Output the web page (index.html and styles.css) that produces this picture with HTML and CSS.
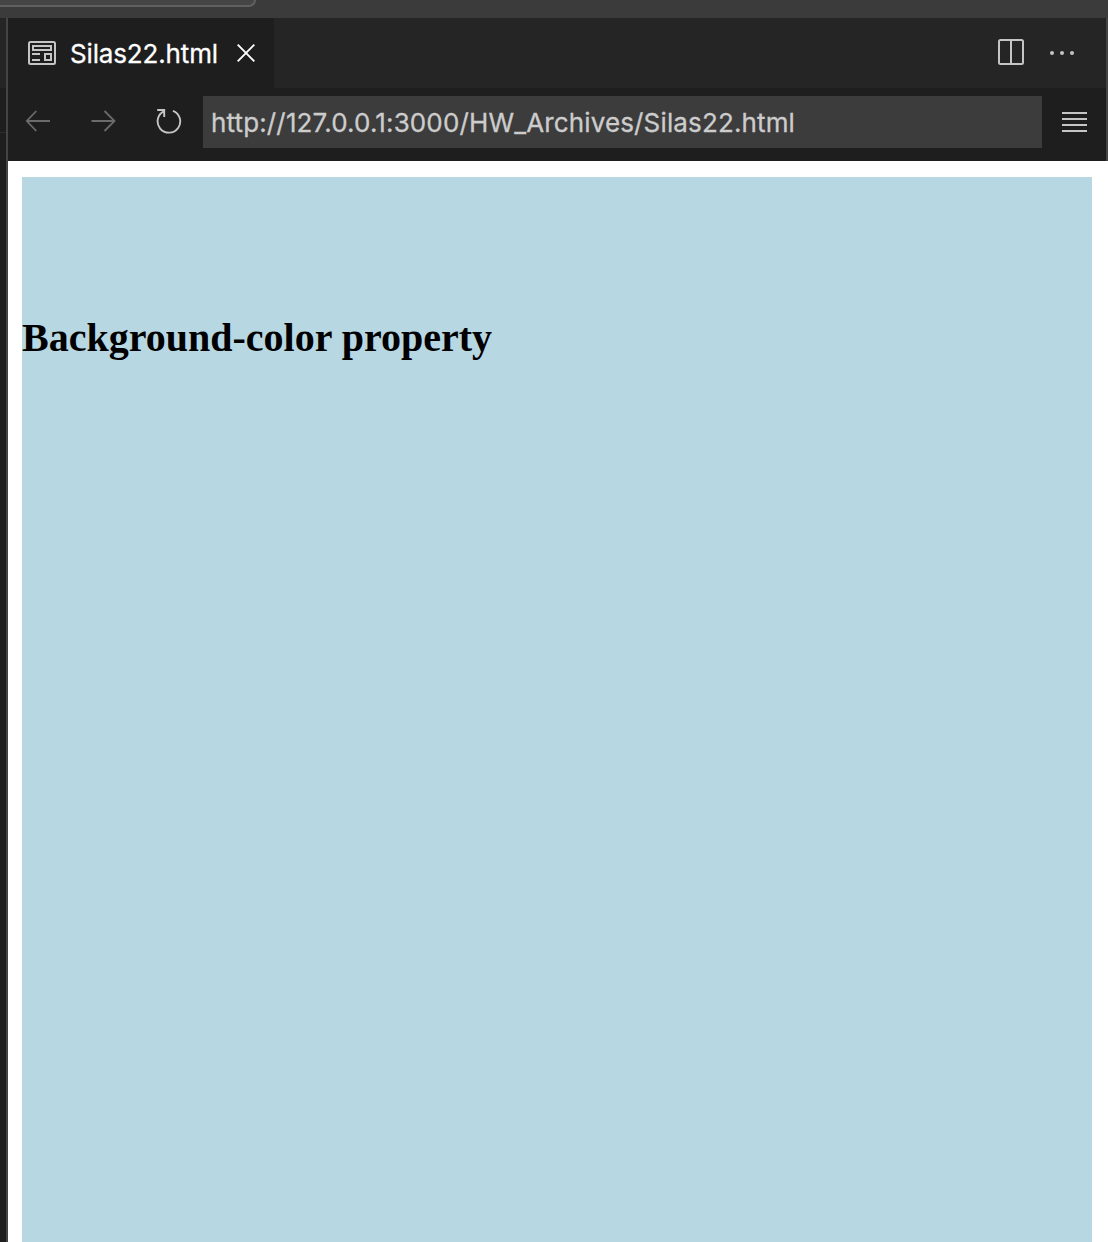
FILE: index.html
```html
<!DOCTYPE html>
<html lang="en">
<head>
<meta charset="utf-8">
<title>Silas22.html</title>
<link rel="stylesheet" href="styles.css">
</head>
<body>
<div class="window">
  <header class="titlebar"><div class="command-center"></div></header>
  <div class="workbench">
    <aside class="neighbor"><div class="neighbor-tabs"></div><div class="neighbor-crumbs"></div></aside>
    <main class="editor">
      <div class="chrome">
        <div class="tabs">
          <div class="tab">
            <svg width="28" height="24" viewBox="0 0 28 24" fill="none" stroke="#c5c5c5" stroke-width="2"><rect x="1" y="1" width="26" height="22" rx="1.5"/><rect x="5" y="5" width="18" height="4"/><path d="M4 13h8M4 19h8"/><rect x="17" y="13" width="6" height="6"/></svg>
            <span class="tab-label">Silas22.html</span>
            <svg width="18" height="18" viewBox="0 0 18 18" fill="none" stroke="#fff" stroke-width="1.9"><path d="M.7.7l16.6 16.6M17.3.7L.7 17.3"/></svg>
          </div>
          <div class="actions">
            <svg width="26" height="26" viewBox="0 0 26 26" fill="none" stroke="#c5c5c5" stroke-width="2"><rect x="1" y="1" width="24" height="24" rx="1.5"/><path d="M13 1v24"/></svg>
            <svg width="26" height="26" viewBox="0 0 26 26" fill="#c5c5c5"><circle cx="3" cy="14" r="2"/><circle cx="13" cy="14" r="2"/><circle cx="23" cy="14" r="2"/></svg>
          </div>
        </div>
        <nav class="toolbar">
          <svg class="back" width="26" height="22" viewBox="0 0 26 22" fill="none" stroke="#6b6b6b" stroke-width="1.8"><path d="M25 11H2M11.3 1L1.8 11l9.5 10"/></svg>
          <svg class="forward" width="26" height="22" viewBox="0 0 26 22" fill="none" stroke="#6b6b6b" stroke-width="1.8"><path d="M.5 11H24M13.5 1l10 10-10 10"/></svg>
          <svg class="reload" width="26" height="26" viewBox="0 0 26 26" fill="none" stroke="#c5c5c5" stroke-width="1.9"><path d="M1.2 2h7v7M8.2 3.1A11.3 11.3 0 1 0 16.9 2.8"/></svg>
          <div class="address">http://127.0.0.1:3000/HW_Archives/Silas22.html</div>
          <svg class="menu" width="25" height="20" viewBox="0 0 25 20" stroke="#c5c5c5" stroke-width="2"><path d="M0 1h25M0 7h25M0 13h25M0 19h25"/></svg>
        </nav>
      </div>
      <section class="page"><div class="canvas"><h1>Background-color property</h1></div></section>
    </main>
  </div>
</div>
</body>
</html>
```

FILE: styles.css
```css
* { box-sizing: border-box; }
body { margin: 0; background: #1e1e1e; }
svg { display: block; flex: none; }
.window { display: flex; flex-direction: column; height: 1242px; width: 1108px; overflow: hidden; }
.titlebar { height: 18px; background: #3b3b3b; flex: none; }
.command-center { width: 256px; height: 7px; background: #454545; border: solid #606060; border-width: 0 2px 2px 0; border-radius: 0 0 10px 0; }
.workbench { display: flex; flex: 1; min-height: 0; }
.neighbor { width: 8px; border-right: 2px solid #444; background: #1e1e1e; }
.neighbor-tabs { height: 70px; background: #252526; }
.neighbor-crumbs { height: 45px; border-bottom: 1px solid #2b2b2b; }
.editor { flex: 1; display: flex; flex-direction: column; }
.chrome { height: 143px; background: #1e1e1e; border-right: 2px solid #444; }
.tabs { height: 70px; display: flex; justify-content: space-between; background: #252526; }
.tab { width: 266px; display: flex; align-items: center; padding-left: 20px; background: #1e1e1e; }
.tab-label { width: 181px; padding: 2px 0 0 14px; font: 26px/32px Inter, sans-serif; letter-spacing: -.15px; color: #fff; white-space: nowrap; -webkit-text-stroke: .3px #fff; }
.actions { display: flex; align-items: center; gap: 25px; padding: 0 31px 2px 0; }
.toolbar { height: 73px; display: flex; align-items: flex-start; padding: 8px 19px 0 17px; }
.back { margin: 14px 40px 0 0; }
.forward { margin: 14px 39px 0 0; }
.reload { margin: 12px 21px 0 0; }
.address { flex: 1; height: 52px; padding: 1px 8px 0; background: #3c3c3c; color: #ccc; font: 26px/52px Inter, sans-serif; letter-spacing: .14px; white-space: nowrap; -webkit-text-stroke: .3px #ccc; }
.menu { margin: 16px 0 0 20px; }
.page { flex: 1; background: #fff; padding: 16px 16px 0 14px; }
.canvas { height: 100%; background: #b7d7e3; padding-top: 138px; }
.canvas h1 { margin: 0; font: bold 40px/46px "Liberation Serif", serif; color: #000; white-space: nowrap; }
```
